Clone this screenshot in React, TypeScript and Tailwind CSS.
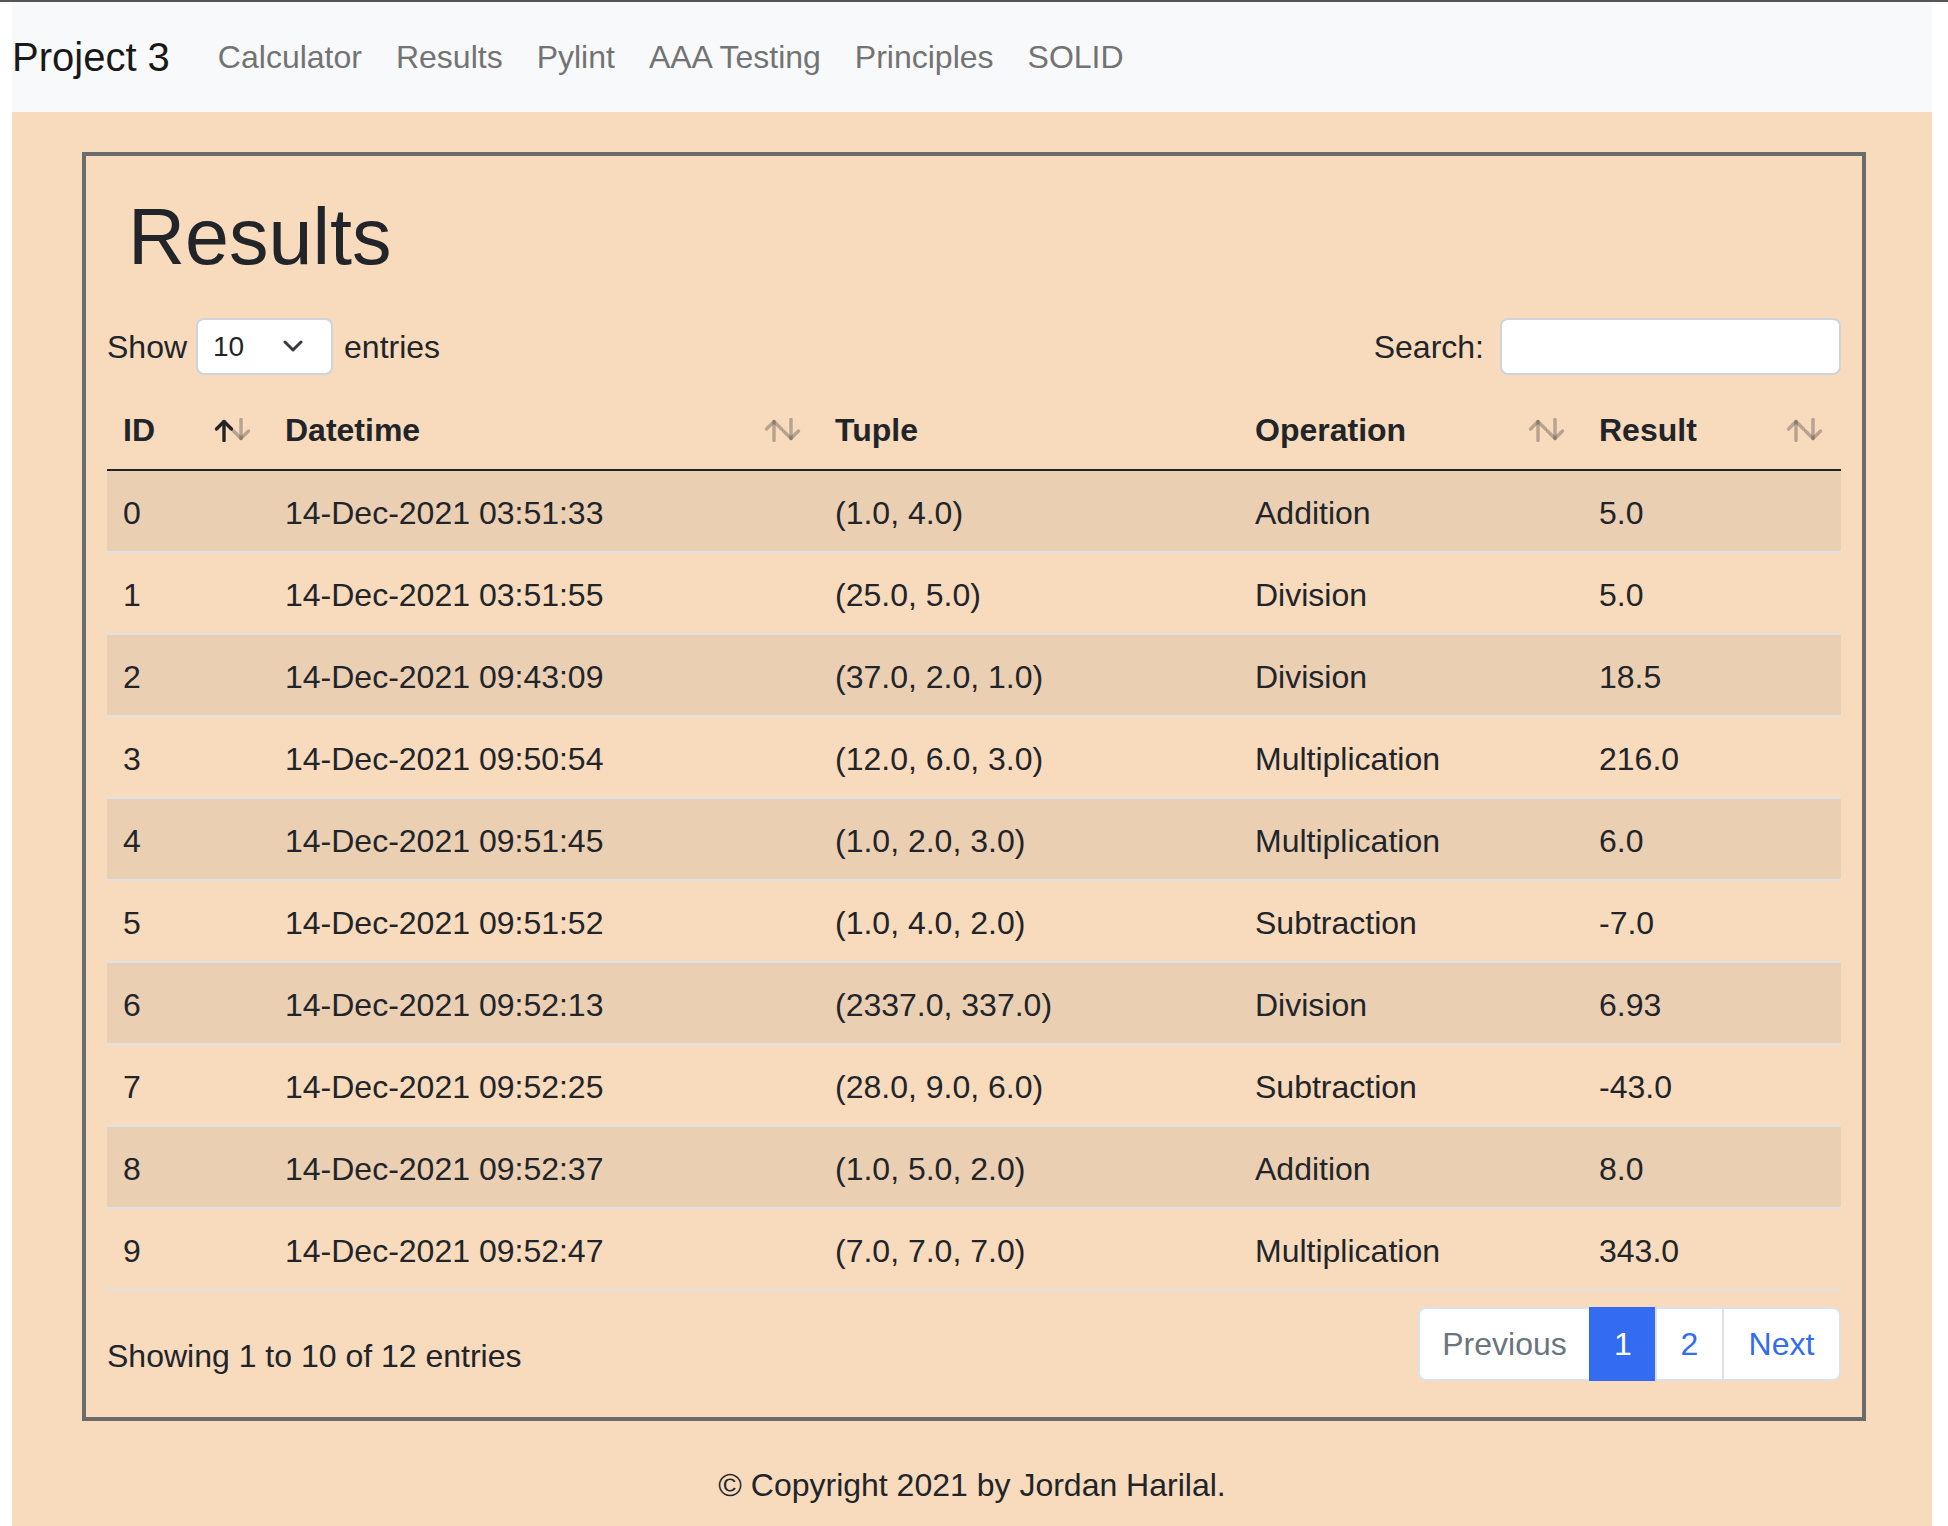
import React from "react";

const rows: string[][] = [
  ["0", "14-Dec-2021 03:51:33", "(1.0, 4.0)", "Addition", "5.0"],
  ["1", "14-Dec-2021 03:51:55", "(25.0, 5.0)", "Division", "5.0"],
  ["2", "14-Dec-2021 09:43:09", "(37.0, 2.0, 1.0)", "Division", "18.5"],
  ["3", "14-Dec-2021 09:50:54", "(12.0, 6.0, 3.0)", "Multiplication", "216.0"],
  ["4", "14-Dec-2021 09:51:45", "(1.0, 2.0, 3.0)", "Multiplication", "6.0"],
  ["5", "14-Dec-2021 09:51:52", "(1.0, 4.0, 2.0)", "Subtraction", "-7.0"],
  ["6", "14-Dec-2021 09:52:13", "(2337.0, 337.0)", "Division", "6.93"],
  ["7", "14-Dec-2021 09:52:25", "(28.0, 9.0, 6.0)", "Subtraction", "-43.0"],
  ["8", "14-Dec-2021 09:52:37", "(1.0, 5.0, 2.0)", "Addition", "8.0"],
  ["9", "14-Dec-2021 09:52:47", "(7.0, 7.0, 7.0)", "Multiplication", "343.0"],
];

function SortIcon({ active }: { active?: boolean }) {
  const light = "rgba(33,37,41,0.3)";
  return (
    <svg width="37" height="24" viewBox="0 0 37 24" fill="none">
      <g stroke={active ? "#212529" : light} strokeWidth="3.4" strokeLinecap="round" strokeLinejoin="round">
        <path d="M10 22.5V3.5" />
        <path d="M2.5 11L10 3.5L17.5 11" />
      </g>
      <g stroke={light} strokeWidth="3.4" strokeLinecap="round" strokeLinejoin="round">
        <path d="M27 1.5V20.5" />
        <path d="M19.5 13L27 20.5L34.5 13" />
      </g>
    </svg>
  );
}

const cols = [
  { label: "ID", w: "w-[162px]", sort: true, active: true },
  { label: "Datetime", w: "w-[550px]", sort: true },
  { label: "Tuple", w: "w-[420px]", sort: false },
  { label: "Operation", w: "w-[344px]", sort: true },
  { label: "Result", w: "w-[258px]", sort: true },
];

export default function App() {
  return (
    <div className="min-h-[1526px] bg-white flex flex-col text-[#212529] font-['Liberation_Sans',Arial,sans-serif]">
      <div className="h-[2px] bg-[#555555]" />
      <div className="flex-1 flex flex-col ml-[12px] mr-[16px]">
        <nav className="h-[110px] bg-[#f8f9fa] flex items-center">
          <span className="text-[40px] leading-[60px] text-[#191919] mr-[31px]">Project 3</span>
          {["Calculator", "Results", "Pylint", "AAA Testing", "Principles", "SOLID"].map((l) => (
            <span key={l} className="px-[17px] text-[32px] leading-[48px] text-[#737373]">
              {l}
            </span>
          ))}
        </nav>
        <main className="flex-1 bg-[#f8dabd] pt-[40px] pb-[16px]">
          <div className="ml-[70px] mr-[66px] border-[4px] border-[#6b6b6b] pt-[32px] px-[21px] pb-[36px]">
            <h1 className="pl-[21px] text-[79px] leading-[98px] text-[#212529]">Results</h1>
            <div className="mt-[32px] h-[57px] flex items-center justify-between text-[32px] leading-[48px]">
              <div className="flex items-center">
                <span>Show</span>
                <div className="ml-[9px] mr-[11px] w-[137px] h-[57px] bg-white border-2 border-[#ced4da] rounded-[8px] flex items-center justify-between pl-[15px] pr-[28px]">
                  <span className="text-[28px] leading-[40px]">10</span>
                  <svg width="20" height="13" viewBox="0 0 20 13" fill="none">
                    <path d="M2 2L10 10L18 2" stroke="#343a40" strokeWidth="3" strokeLinecap="round" strokeLinejoin="round" />
                  </svg>
                </div>
                <span>entries</span>
              </div>
              <div className="flex items-center">
                <span className="mr-[16px]">Search:</span>
                <div className="w-[341px] h-[57px] bg-white border-2 border-[#ced4da] rounded-[8px]" />
              </div>
            </div>
            <table className="mt-[15px] w-full table-fixed border-collapse text-[32px] leading-[48px]">
              <colgroup>
                {cols.map((c) => (
                  <col key={c.label} className={c.w} />
                ))}
              </colgroup>
              <thead>
                <tr className="border-b-2 border-[#212529]">
                  {cols.map((c) => (
                    <th key={c.label} className="h-[80px] p-0 text-left font-bold">
                      <div className="flex items-center justify-between pl-[16px] pr-[18px]">
                        <span>{c.label}</span>
                        {c.sort && <SortIcon active={c.active} />}
                      </div>
                    </th>
                  ))}
                </tr>
              </thead>
              <tbody>
                {rows.map((r, i) => (
                  <tr key={i} className={`border-b-2 border-[#dee2e6] ${i % 2 === 0 ? "bg-[#ebcfb3]" : ""}`}>
                    {r.map((v, j) => (
                      <td key={j} className="h-[82px] px-[16px] pt-[3px] pb-0">
                        {v}
                      </td>
                    ))}
                  </tr>
                ))}
              </tbody>
            </table>
            <div className="mt-[16px] flex items-start justify-between">
              <div className="pt-[25px] text-[32px] leading-[48px]">Showing 1 to 10 of 12 entries</div>
              <div className="flex h-[74px] text-[32px] leading-[48px]">
                <div className="w-[173px] flex items-center justify-center bg-white border-2 border-[#dee2e6] rounded-l-[8px] text-[#6c757d]">
                  Previous
                </div>
                <div className="-ml-[2px] w-[68px] flex items-center justify-center bg-[#336cf0] border-2 border-[#336cf0] text-white">
                  1
                </div>
                <div className="-ml-[2px] w-[69px] flex items-center justify-center bg-white border-2 border-[#dee2e6] text-[#336cf0]">
                  2
                </div>
                <div className="-ml-[2px] w-[119px] flex items-center justify-center bg-white border-2 border-[#dee2e6] rounded-r-[8px] text-[#336cf0]">
                  Next
                </div>
              </div>
            </div>
          </div>
          <footer className="mt-[40px] text-center text-[32px] leading-[48px]">© Copyright 2021 by Jordan Harilal.</footer>
        </main>
      </div>
    </div>
  );
}
